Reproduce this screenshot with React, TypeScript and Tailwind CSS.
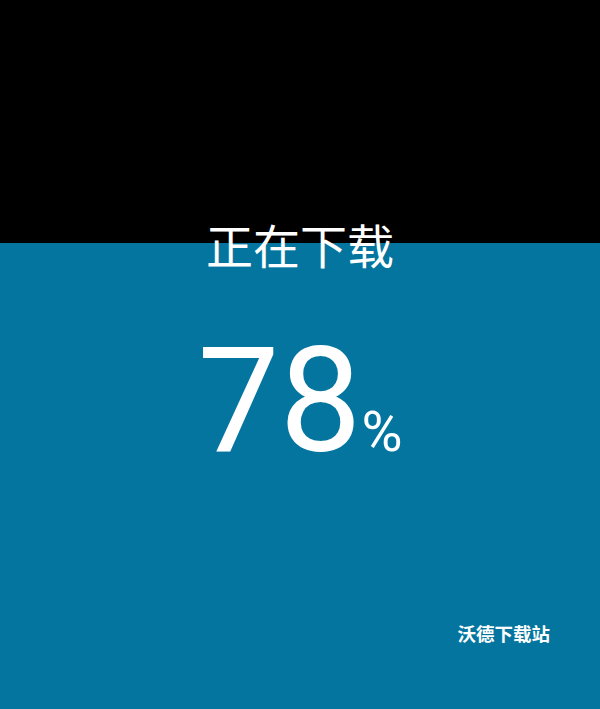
export default function App() {
  return (
    <div className="flex h-[709px] w-full flex-col items-center bg-[linear-gradient(to_bottom,#000_243px,#03759f_243px)] pt-[220px] text-white">
      <h1 className="font-['Noto_Sans_CJK_SC',sans-serif] text-[47px] leading-none font-normal">
        正在下载
      </h1>
      <div className="mt-[62px] flex items-baseline font-['Roboto',sans-serif] leading-none">
        <span className="text-[146px]">78</span>
        <span className="text-[56px]">%</span>
      </div>
      <div className="mt-[149px] flex w-full justify-end pr-[50px]">
        <span className="font-['Noto_Sans_CJK_SC',sans-serif] text-[18.5px] leading-none font-bold">
          沃德下载站
        </span>
      </div>
    </div>
  );
}
